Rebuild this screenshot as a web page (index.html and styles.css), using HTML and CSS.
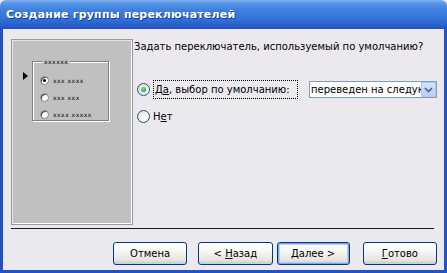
FILE: index.html
```html
<!DOCTYPE html>
<html lang="ru">
<head>
    <meta charset="UTF-8">
    <title>Создание группы переключателей</title>
    <link rel="stylesheet" href="styles.css">
</head>
<body>
    <div class="window">
        <div class="titlebar">Создание группы переключателей</div>
        <div class="client">
            <div class="main">
                <div class="preview">
                    <div class="pointer"></div>
                    <div class="groupbox">
                        <span class="group-label">xxxxxx</span>
                        <div class="mini-row"><span class="mini-radio checked"></span><span>xxx xxxx</span></div>
                        <div class="mini-row"><span class="mini-radio"></span><span>xxx xxx</span></div>
                        <div class="mini-row"><span class="mini-radio"></span><span>xxxx xxxxx</span></div>
                    </div>
                </div>
                <div class="options">
                    <p class="question">Задать переключатель, используемый по умолчанию?</p>
                    <div class="option-row">
                        <span class="radio checked"></span>
                        <span class="focus-label">Д<u>а</u>, выбор по умолчанию:</span>
                        <div class="combo">
                            <span class="combo-text">переведен на следующую</span>
                            <span class="combo-btn">
                                <svg viewBox="0 0 9 6" width="9" height="6">
                                    <path d="M1 1 L4.5 4.5 L8 1" fill="none" stroke="#4d6185" stroke-width="1.6"/>
                                </svg>
                            </span>
                        </div>
                    </div>
                    <div class="option-row second">
                        <span class="radio"></span>
                        <span class="plain-label">Н<u>е</u>т</span>
                    </div>
                </div>
            </div>
            <div class="separator"></div>
            <div class="buttons">
                <button class="btn">Отмена</button>
                <button class="btn back">&lt; <u>Н</u>азад</button>
                <button class="btn default"><u>Д</u>алее &gt;</button>
                <button class="btn finish"><u>Г</u>отово</button>
            </div>
        </div>
    </div>
</body>
</html>
```

FILE: styles.css
```css
* {
    margin: 0;
    padding: 0;
    box-sizing: border-box;
}

body {
    font-family: "DejaVu Sans", sans-serif;
    font-size: 10px;
    background: #ece9ee;
}

.window {
    width: 447px;
    height: 273px;
    display: flex;
    flex-direction: column;
}

.titlebar {
    height: 29px;
    padding: 8px 0 0 6px;
    color: #ffffff;
    font-weight: bold;
    font-size: 11px;
    letter-spacing: 0.2px;
    text-shadow: 1px 1px 0 #1a3d8f;
    background: linear-gradient(#86b4f0 0, #5b97e8 3px, #3f80df 10px, #3474d8 18px, #2a60cc 25px, #2150c0 29px);
    border-top-right-radius: 6px;
    border-top-left-radius: 6px;
}

.client {
    flex: 1;
    border: 3px solid #2253c4;
    border-top: none;
    background: #ece9ee;
    padding: 10px 7px 0 8px;
    display: flex;
    flex-direction: column;
}

.main {
    display: flex;
    height: 186px;
}

/* picture of the option group */
.preview {
    width: 123px;
    height: 186px;
    background: #c0c0c0;
    border: 1px solid #9a9a9a;
    box-shadow: inset 1px 1px 0 #e4e4e4, inset -1px -1px 0 #ffffff;
    display: flex;
    align-items: flex-start;
    padding: 21px 0 0 11px;
}

.pointer {
    width: 0;
    height: 0;
    margin-top: 11px;
    border-top: 4px solid transparent;
    border-bottom: 4px solid transparent;
    border-left: 5px solid #000000;
}

.groupbox {
    position: relative;
    width: 77px;
    height: 60px;
    margin-left: 4px;
    border: 1px solid #808080;
    box-shadow: 1px 1px 0 #ffffff, inset 1px 1px 0 #ffffff;
    padding: 10px 0 0 7px;
    font-size: 6px;
    letter-spacing: 0.5px;
    color: #000000;
}

.group-label {
    position: absolute;
    top: -4px;
    left: 9px;
    padding: 0 2px;
    background: #c0c0c0;
}

.mini-row {
    display: flex;
    align-items: center;
    gap: 4px;
    height: 17px;
}

.mini-radio {
    width: 9px;
    height: 9px;
    border-radius: 50%;
    background: #ffffff;
    border: 1px solid #808080;
    box-shadow: inset 1px 1px 0 #404040;
    position: relative;
}

.mini-radio.checked::after {
    content: "";
    position: absolute;
    left: 2px;
    top: 2px;
    width: 3px;
    height: 3px;
    border-radius: 50%;
    background: #000000;
}

/* wizard question */
.options {
    flex: 1;
    padding-left: 1px;
}

.question {
    margin-top: 1px;
    height: 14px;
    line-height: 14px;
    white-space: nowrap;
}

.option-row {
    display: flex;
    align-items: center;
    margin-top: 26px;
    margin-left: 3px;
}

.option-row.second {
    margin-top: 11px;
}

.radio {
    width: 13px;
    height: 13px;
    border-radius: 50%;
    border: 1px solid #1c5180;
    background: radial-gradient(circle at 65% 65%, #ffffff 0, #f4f4f0 40%, #d4d4cc 100%);
    position: relative;
    flex-shrink: 0;
}

.radio.checked::after {
    content: "";
    position: absolute;
    left: 3px;
    top: 3px;
    width: 5px;
    height: 5px;
    border-radius: 50%;
    background: radial-gradient(circle at 40% 40%, #8ee38e 0, #2fb52f 60%, #1f8f1f 100%);
}

.focus-label {
    width: 145px;
    height: 19px;
    line-height: 17px;
    margin-left: 3px;
    padding-left: 1px;
    border: 1px dotted #000000;
    white-space: nowrap;
}

.plain-label {
    margin-left: 3px;
}

.combo {
    display: flex;
    align-items: stretch;
    width: 128px;
    height: 17px;
    margin-left: 11px;
    border: 1px solid #7f9db9;
    background: #ffffff;
}

.combo-text {
    flex: 1;
    overflow: hidden;
    white-space: nowrap;
    line-height: 15px;
    padding-left: 1px;
}

.combo-btn {
    width: 15px;
    display: flex;
    align-items: center;
    justify-content: center;
    background: linear-gradient(#d5e2fc, #b6cdf8);
    border: 1px solid #b2c7f0;
}

.separator {
    margin-top: 3px;
    width: 423px;
    border-top: 1px solid #1a1a1a;
}

.buttons {
    display: flex;
    margin-top: 13px;
    padding-left: 102px;
}

.btn {
    width: 75px;
    height: 23px;
    font-family: "DejaVu Sans", sans-serif;
    font-size: 10px;
    color: #000000;
    border: 1px solid #003c74;
    border-radius: 3px;
    background: linear-gradient(#ffffff 0, #f6f6f3 40%, #e6e5df 80%, #d6d0c5 100%);
    box-shadow: inset 0 -2px 0 #c5d2e4;
}

.btn.back {
    margin-left: 11px;
}

.btn.default {
    width: 74px;
    margin-left: 4px;
    box-shadow: inset 0 0 0 1px #7fa6e8, inset 0 0 0 2px #b6ccf2;
}

.btn.finish {
    margin-left: 13px;
}
```
